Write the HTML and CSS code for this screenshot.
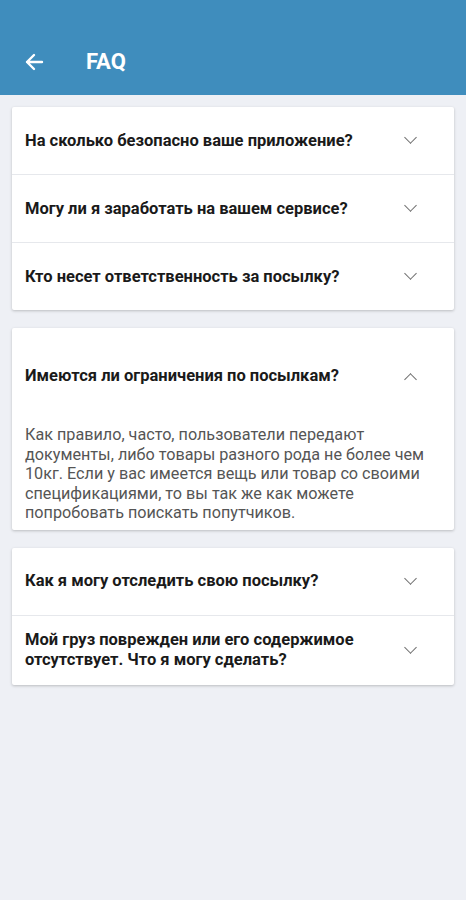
FILE: index.html
```html
<!DOCTYPE html>
<html lang="ru">
<head>
    <meta charset="UTF-8">
    <meta name="viewport" content="width=device-width, initial-scale=1.0">
    <title>FAQ</title>
    <link rel="stylesheet" href="styles.css">
</head>
<body>
    <header class="topbar">
        <button class="back-btn" aria-label="Назад">
            <svg width="20" height="20" viewBox="0 0 20 20"><path d="M18 10H3M10 3L3 10l7 7" fill="none" stroke="#fff" stroke-width="2.4" stroke-linecap="round" stroke-linejoin="round"/></svg>
        </button>
        <h1>FAQ</h1>
    </header>
    <main class="content">
        <section class="card">
            <div class="faq-row">
                <h3>На сколько безопасно ваше приложение?</h3>
                <span class="chevron"></span>
            </div>
            <div class="faq-row">
                <h3>Могу ли я заработать на вашем сервисе?</h3>
                <span class="chevron"></span>
            </div>
            <div class="faq-row">
                <h3>Кто несет ответственность за посылку?</h3>
                <span class="chevron"></span>
            </div>
        </section>
        <section class="card">
            <div class="faq-row open">
                <h3>Имеются ли ограничения по посылкам?</h3>
                <span class="chevron up"></span>
            </div>
            <p class="answer">Как правило, часто, пользователи передают документы, либо товары разного рода не более чем 10кг. Если у вас имеется вещь или товар со своими спецификациями, то вы так же как можете попробовать поискать попутчиков.</p>
        </section>
        <section class="card">
            <div class="faq-row">
                <h3>Как я могу отследить свою посылку?</h3>
                <span class="chevron"></span>
            </div>
            <div class="faq-row tall">
                <h3>Мой груз поврежден или его содержимое отсутствует. Что я могу сделать?</h3>
                <span class="chevron"></span>
            </div>
        </section>
    </main>
</body>
</html>
```

FILE: styles.css
```css
body {
    font-family: Roboto, "Noto Sans", sans-serif;
    background-color: #eef0f5;
    color: #1c1c1c;
    margin: 0;
    padding: 0;
}
.topbar {
    background-color: #3f8dbd;
    height: 95px;
    display: flex;
    align-items: flex-end;
    padding: 0 0 20px 24px;
    box-sizing: border-box;
    color: #fff;
}
.back-btn {
    background: none;
    border: none;
    padding: 0;
    width: 20px;
    height: 20px;
    margin-bottom: 3px;
    display: flex;
}
.topbar h1 {
    margin: 0 0 0 42px;
    font-size: 22px;
    font-weight: 700;
    line-height: 26px;
}
.content {
    padding: 12px 12px;
    display: flex;
    flex-direction: column;
    gap: 18px;
}
.card {
    background-color: #fff;
    border-radius: 2px;
    box-shadow: 0 1px 3px rgba(0, 0, 0, 0.22);
}
.faq-row {
    display: flex;
    align-items: center;
    justify-content: space-between;
    min-height: 67px;
    padding: 0 39px 0 13px;
    border-bottom: 1px solid #e6e8ec;
}
.faq-row:last-child {
    border-bottom: none;
}
.faq-row.open {
    min-height: 96px;
    border-bottom: none;
}
.faq-row.tall {
    min-height: 69px;
}
.faq-row h3 {
    margin: 0;
    font-size: 16.5px;
    font-weight: 700;
    line-height: 20px;
    max-width: 345px;
    color: #1a1a1a;
}
.chevron {
    width: 8px;
    height: 8px;
    border-right: 1.8px solid #6d6d6d;
    border-bottom: 1.8px solid #6d6d6d;
    transform: translateY(-3px) rotate(45deg);
    flex-shrink: 0;
}
.chevron.up {
    transform: translateY(3px) rotate(-135deg);
}
.answer {
    margin: 0;
    padding: 1px 16px 7px 13px;
    font-size: 16.2px;
    line-height: 19.5px;
    color: #555;
}
```
